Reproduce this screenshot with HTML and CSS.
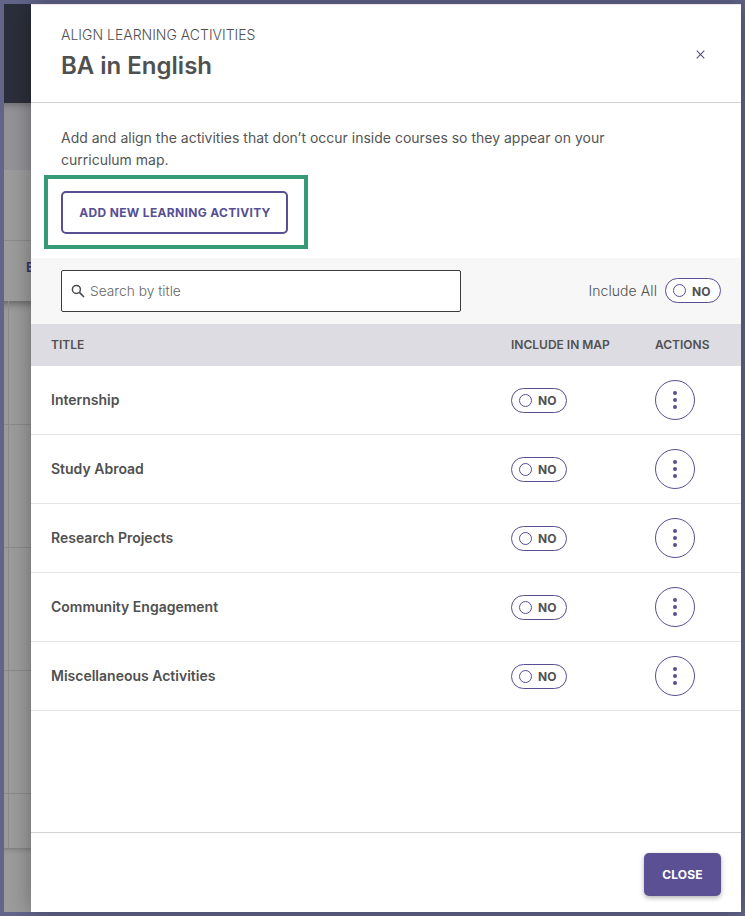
FILE: index.html
```html
<!DOCTYPE html>
<html lang="en">
<head>
<meta charset="utf-8">
<title>Align Learning Activities</title>
<link rel="stylesheet" href="styles.css">
</head>
<body>
<div class="frame">
  <div class="backdrop" aria-hidden="true">
    <div class="bd-top"></div>
    <div class="bd-sub"></div>
    <div class="bd-tabs">
      <div class="bd-tab-a"></div>
      <div class="bd-tab-b"><span class="bd-letter">E</span></div>
    </div>
    <div class="bd-table">
      <div class="bd-row bd-row-1"></div>
      <div class="bd-row bd-row-2"></div>
      <div class="bd-row bd-row-2"></div>
      <div class="bd-row bd-row-2"></div>
      <div class="bd-row bd-row-3"></div>
    </div>
    <div class="bd-foot"></div>
  </div>

  <main class="modal">
    <header class="modal-head">
      <div>
        <p class="eyebrow">ALIGN LEARNING ACTIVITIES</p>
        <h1 class="title">BA in English</h1>
      </div>
      <button class="close-x" aria-label="Close">
        <svg width="9" height="9" viewBox="0 0 9 9"><path d="M.7.7l7.6 7.6M8.3.7L.7 8.3" stroke="#574f94" stroke-width="1.1" fill="none"/></svg>
      </button>
    </header>

    <section class="intro">
      <p class="intro-text">Add and align the activities that don’t occur inside courses so they appear on your curriculum map.</p>
      <div class="highlight">
        <button class="btn-outline">ADD NEW LEARNING ACTIVITY</button>
      </div>
    </section>

    <div class="toolbar">
      <label class="search">
        <svg class="search-icon" width="14" height="14" viewBox="0 0 14 14"><circle cx="5.4" cy="5.4" r="4" stroke="#4a4a4a" stroke-width="1.5" fill="none"/><path d="M8.4 8.4l4.6 4.6" stroke="#4a4a4a" stroke-width="1.7" fill="none"/></svg>
        <input class="search-input" type="text" placeholder="Search by title">
      </label>
      <div class="include-all">
        <span>Include All</span>
        <span class="toggle"><i class="knob"></i><b>NO</b></span>
      </div>
    </div>

    <div class="table">
      <div class="thead">
        <div class="c-title">TITLE</div>
        <div class="c-map">INCLUDE IN MAP</div>
        <div class="c-act">ACTIONS</div>
      </div>
      <div class="row">
        <div class="c-title">Internship</div>
        <div class="c-map"><span class="toggle"><i class="knob"></i><b>NO</b></span></div>
        <div class="c-act"><button class="kebab" aria-label="Actions"><i></i><i></i><i></i></button></div>
      </div>
      <div class="row">
        <div class="c-title">Study Abroad</div>
        <div class="c-map"><span class="toggle"><i class="knob"></i><b>NO</b></span></div>
        <div class="c-act"><button class="kebab" aria-label="Actions"><i></i><i></i><i></i></button></div>
      </div>
      <div class="row">
        <div class="c-title">Research Projects</div>
        <div class="c-map"><span class="toggle"><i class="knob"></i><b>NO</b></span></div>
        <div class="c-act"><button class="kebab" aria-label="Actions"><i></i><i></i><i></i></button></div>
      </div>
      <div class="row">
        <div class="c-title">Community Engagement</div>
        <div class="c-map"><span class="toggle"><i class="knob"></i><b>NO</b></span></div>
        <div class="c-act"><button class="kebab" aria-label="Actions"><i></i><i></i><i></i></button></div>
      </div>
      <div class="row">
        <div class="c-title">Miscellaneous Activities</div>
        <div class="c-map"><span class="toggle"><i class="knob"></i><b>NO</b></span></div>
        <div class="c-act"><button class="kebab" aria-label="Actions"><i></i><i></i><i></i></button></div>
      </div>
    </div>

    <footer class="modal-foot">
      <button class="btn-solid">CLOSE</button>
    </footer>
  </main>
</div>
</body>
</html>
```
FILE: styles.css
```css
* { box-sizing: border-box; }
html, body { margin: 0; padding: 0; }
body {
  width: 745px;
  height: 916px;
  overflow: hidden;
  font-family: Inter, "Liberation Sans", sans-serif;
  color: #505050;
}
button { font-family: inherit; cursor: pointer; }

.frame {
  display: flex;
  width: 745px;
  height: 916px;
  border: 4px solid #62648a;
  background: #9c9c9c;
}

/* dimmed page behind the dialog */
.backdrop {
  width: 27px;
  flex: none;
  overflow: hidden;
  display: flex;
  flex-direction: column;
}
.bd-top { height: 99px; flex: none; background: #2b2f3b; }
.bd-sub { height: 67px; flex: none; background: #939398; box-shadow: inset 0 6px 6px -4px rgba(0,0,0,.25); }
.bd-tabs { height: 131px; flex: none; background: #9c9c9c; }
.bd-tab-a { height: 71px; border-bottom: 1px solid #8b8b8b; }
.bd-tab-b { height: 60px; padding: 15px 0 0 22px; }
.bd-letter { font-size: 13px; font-weight: 600; line-height: 16px; color: #36336a; }
.bd-table {
  flex: none;
  background: #9c9c9c;
  box-shadow: inset 0 8px 7px -5px rgba(0,0,0,.35);
}
.bd-row { border-bottom: 1px solid #8a8a8a; background: linear-gradient(to right, transparent 4px, #8c8c8c 4px, #8c8c8c 5px, transparent 5px); }
.bd-row-1 { height: 124px; }
.bd-row-2 { height: 123px; }
.bd-row-3 { height: 54px; border-bottom: 0; }
.bd-foot { flex: 1; background: #9c9c9c; box-shadow: inset 0 6px 5px -5px rgba(0,0,0,.25); }

/* dialog */
.modal {
  flex: 1;
  min-width: 0;
  display: flex;
  flex-direction: column;
  background: #fff;
  border-top: 1px solid #f3e6ee;
  box-shadow: 0 0 22px rgba(0,0,0,.32);
  position: relative;
}
.modal-head {
  height: 98px;
  flex: none;
  padding: 21px 33px 0 30px;
  display: flex;
  justify-content: space-between;
  align-items: flex-start;
  border-bottom: 1px solid #d2d2d2;
}
.eyebrow { margin: 0; font-size: 14px; line-height: 18px; font-weight: 300; color: #505050; }
.title { margin: 7px 0 0; font-size: 24px; line-height: 30px; font-weight: 600; color: #505050; }
.close-x { border: 0; background: none; padding: 0; width: 14px; height: 14px; margin-top: 21px; margin-right: 1px; display: flex; align-items: center; justify-content: center; }

.intro { height: 155px; flex: none; padding: 24px 0 0 30px; }
.intro-text { margin: 0; width: 590px; font-size: 14px; line-height: 22px; font-weight: 400; color: #555; }
.highlight {
  width: 264px;
  height: 74px;
  margin: 4px 0 0 -17px;
  border: 4px solid #359a76;
  padding: 12px 16px 11px 13px;
}
.btn-outline {
  display: block;
  width: 227px;
  height: 43px;
  padding: 0 0 0 1px;
  background: #fff;
  border: 2px solid #574f94;
  border-radius: 5px;
  font-size: 12px;
  font-weight: 700;
  letter-spacing: .33px;
  color: #574f94;
}

.toolbar {
  height: 66px;
  flex: none;
  background: #f7f7f7;
  padding: 12px 20px 12px 30px;
  display: flex;
  justify-content: space-between;
  align-items: flex-start;
}
.search {
  width: 400px;
  height: 42px;
  display: flex;
  align-items: center;
  gap: 5px;
  padding: 0 9px 0 9px;
  background: #fff;
  border: 1px solid #3c3c3c;
  border-radius: 2px;
}
.search-icon { flex: none; margin-top: -1px; }
.search-input {
  flex: 1;
  min-width: 0;
  border: 0;
  outline: 0;
  padding: 0;
  background: none;
  font-family: inherit;
  font-size: 13.75px;
  font-weight: 300;
  color: #505050;
}
.search-input::placeholder { color: #666; opacity: 1; }
.include-all {
  display: flex;
  align-items: center;
  gap: 8px;
  height: 25px;
  margin-top: 8px;
  font-size: 14px;
  font-weight: 300;
  letter-spacing: .08px;
  color: #505050;
}

.toggle {
  display: inline-flex;
  align-items: center;
  width: 56px;
  height: 25px;
  padding-left: 7px;
  border: 1px solid #574f94;
  border-radius: 13px;
  background: #fff;
}
.knob {
  width: 13px;
  height: 13px;
  border: 1px solid #574f94;
  border-radius: 50%;
  flex: none;
}
.toggle b {
  margin: 2px 0 0 6px;
  font-size: 12px;
  line-height: 14px;
  font-weight: 700;
  color: #505050;
}

.table { flex: none; }
.thead, .row {
  display: grid;
  grid-template-columns: 480px 144px 1fr;
  align-items: center;
}
.thead {
  height: 42px;
  background: #dedce3;
  font-size: 12px;
  font-weight: 600;
  color: #505050;
  padding-bottom: 1px;
}
.row {
  height: 69px;
  border-bottom: 1px solid #e4e4e4;
  font-size: 14px;
  font-weight: 600;
  color: #505050;
}
.row .c-title { padding-bottom: 2px; }
.c-title { padding-left: 20px; }
.c-map { display: flex; align-items: center; }
.kebab {
  width: 40px;
  height: 40px;
  padding: 0;
  background: #fff;
  border: 1px solid #574f94;
  border-radius: 50%;
  display: flex;
  flex-direction: column;
  align-items: center;
  justify-content: center;
  gap: 3px;
}
.kebab i { width: 4px; height: 4px; border-radius: 50%; background: #574f94; }

.modal-foot {
  flex: 1;
  margin-top: 121px;
  border-top: 1px solid #d2d2d2;
  display: flex;
  justify-content: flex-end;
  align-items: flex-start;
  padding: 20px 20px 0 0;
}
.btn-solid {
  width: 77px;
  height: 43px;
  padding: 0;
  border: 0;
  border-radius: 5px;
  background: #5a5093;
  box-shadow: 0 2px 5px rgba(0,0,0,.3);
  color: #fff;
  font-size: 12px;
  font-weight: 700;
  letter-spacing: .2px;
}
```
